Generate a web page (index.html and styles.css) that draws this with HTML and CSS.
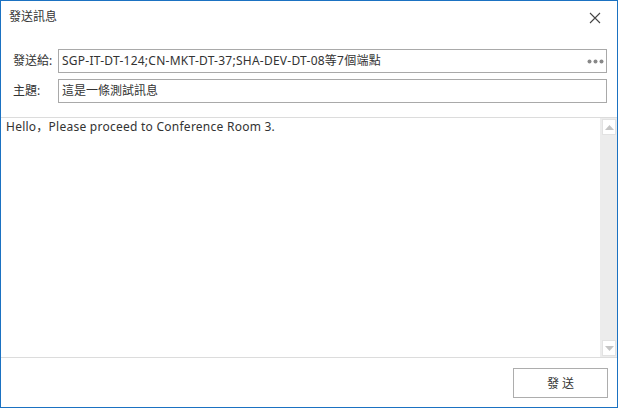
FILE: index.html
```html
<!DOCTYPE html>
<html>
<head>
<meta charset="utf-8">
<link rel="stylesheet" href="styles.css">
</head>
<body>
<div class="window">
  <div class="titlebar">
    <span class="title">發送訊息</span>
    <svg class="close" width="12" height="12" viewBox="0 0 12 12"><path d="M1 1 L11 11 M11 1 L1 11" stroke="#444" stroke-width="1.1" fill="none"/></svg>
  </div>
  <div class="form">
    <div class="row">
      <span class="label">發送給:</span>
      <div class="field">
        <span class="value latin">SGP-IT-DT-124;CN-MKT-DT-37;SHA-DEV-DT-08等7個端點</span>
        <svg class="more" width="17" height="5" viewBox="0 0 17 5"><circle cx="2.5" cy="2.5" r="2" fill="#888"/><circle cx="8.5" cy="2.5" r="2" fill="#888"/><circle cx="14.5" cy="2.5" r="2" fill="#888"/></svg>
      </div>
    </div>
    <div class="row">
      <span class="label">主題:</span>
      <div class="field">
        <span class="value">這是一條測試訊息</span>
      </div>
    </div>
  </div>
  <div class="message">
    <div class="msgtext latin">Hello，Please proceed to Conference Room 3.</div>
    <div class="scrollbar">
      <div class="sbtn"><svg width="9" height="5" viewBox="0 0 9 5"><path d="M0 5 L4.5 0 L9 5 Z" fill="#c4c4c4"/></svg></div>
      <div class="sbtn"><svg width="9" height="5" viewBox="0 0 9 5"><path d="M0 0 L4.5 5 L9 0 Z" fill="#c4c4c4"/></svg></div>
    </div>
  </div>
  <div class="footer">
    <button class="send">發 送</button>
  </div>
</div>
</body>
</html>
```
FILE: styles.css
```css
* { box-sizing: border-box; }
html, body { margin: 0; padding: 0; background: #fff; }
body { font-family: "Noto Sans", "Noto Sans CJK SC", sans-serif; font-size: 12px; color: #333; }
.window {
  width: 618px; height: 408px;
  border: 1px solid #1b72c2;
  display: flex; flex-direction: column;
  background: #fff;
}
.titlebar {
  height: 32px;
  display: flex; align-items: center; justify-content: space-between;
  padding: 0 16px 0 8px;
}
.title { font-size: 12px; color: #333; line-height: 16px; }
.close { display: block; margin-top: 1px; }
.form {
  padding: 16px 10px 14px 12px;
  display: flex; flex-direction: column; gap: 6px;
}
.row { display: flex; align-items: center; height: 24px; }
.label { width: 45px; line-height: 16px; color: #333; }
.field {
  flex: 1; height: 24px;
  border: 1px solid #a9a9a9;
  display: flex; align-items: center; justify-content: space-between;
  padding: 0 2px 0 3px;
}
.value { line-height: 16px; color: #333; white-space: nowrap; }
.latin { letter-spacing: 0.25px; }
.more { display: block; }
.message {
  height: 241px;
  border-top: 1px solid #dcdcdc;
  border-bottom: 1px solid #dcdcdc;
  display: flex;
}
.msgtext { flex: 1; padding: 1px 5px; line-height: 16px; color: #333; }
.scrollbar {
  width: 17px; background: #ececec;
  display: flex; flex-direction: column; justify-content: space-between;
  padding: 1px 1px 1px 2px;
}
.sbtn {
  height: 16px; background: #fff; border: 1px solid #e2e2e2;
  display: flex; align-items: center; justify-content: center;
}
.sbtn svg { display: block; }
.footer {
  flex: 1;
  display: flex; justify-content: flex-end; align-items: flex-start;
  padding: 10px 9px 0 0;
}
.send {
  width: 95px; height: 30px;
  background: #fff; border: 1px solid #adadad;
  font-family: "Noto Sans", "Noto Sans CJK SC", sans-serif; font-size: 12px; color: #333;
  padding: 0;
}
```
